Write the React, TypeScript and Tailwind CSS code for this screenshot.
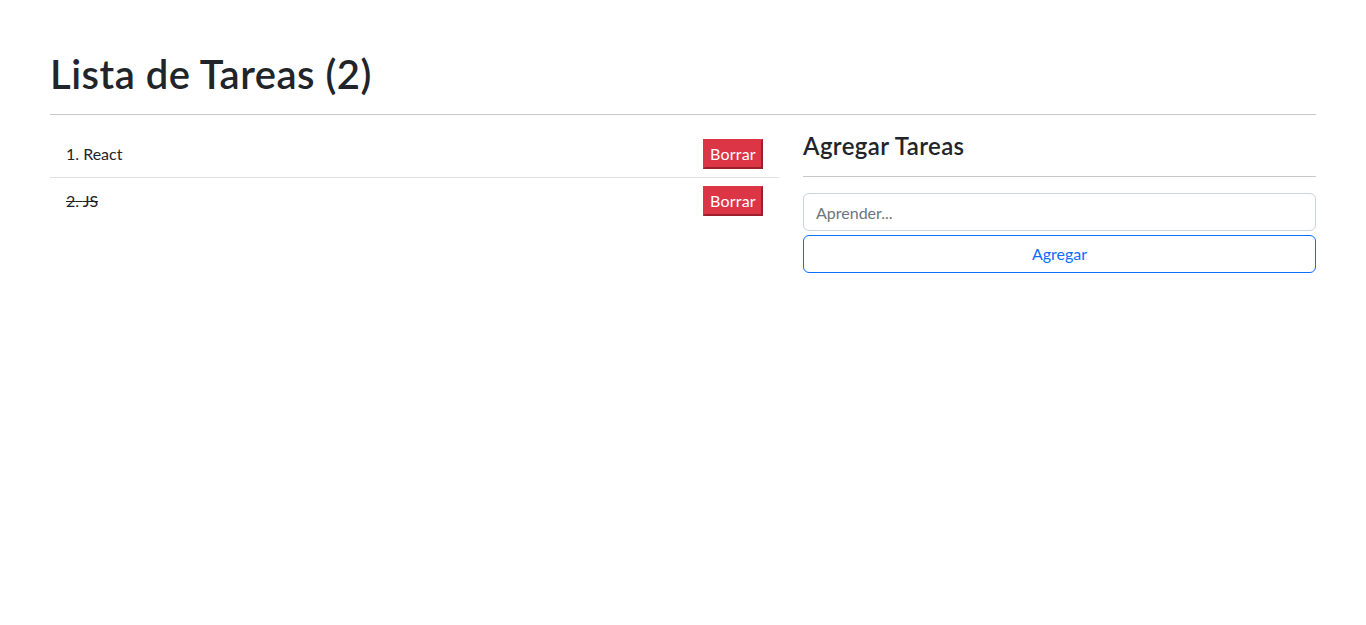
export default function App() {
  const tasks = [
    { id: 1, text: "React", done: false },
    { id: 2, text: "JS", done: true },
  ];
  return (
    <div className="min-h-screen bg-white text-[#212529] px-[50px] pt-[50px]" style={{ fontFamily: 'Lato, "Open Sans", sans-serif' }}>
      <h1 className="text-[40px] leading-[48px] font-semibold tracking-[0.5px] m-0">Lista de Tareas (2)</h1>
      <div className="h-px bg-[#c8c9ca] mt-[16px] mb-[16px]" />
      <div className="flex gap-[24px]">
        <div className="w-[729px] shrink-0">
          {tasks.map((t, i) => (
            <div
              key={t.id}
              className={`flex items-center justify-between px-[16px] py-[8px] ${i < tasks.length - 1 ? "border-b border-[#dee2e6]" : ""}`}
            >
              <span className={`text-[16px] ${t.done ? "line-through" : ""}`}>
                {i + 1}. {t.text}
              </span>
              <button className="w-[60px] h-[30px] bg-[#dc3545] text-white text-[16px] tracking-[0.2px] border-2 border-solid border-t-[#dc3545] border-l-[#dc3545] border-r-[#9c1f2b] border-b-[#9c1f2b] flex items-center justify-center">
                Borrar
              </button>
            </div>
          ))}
        </div>
        <div className="flex-1">
          <h4 className="text-[24px] leading-[29px] font-semibold tracking-[0.4px] m-0">Agregar Tareas</h4>
          <div className="h-px bg-[#c8c9ca] mt-[16px] mb-[16px]" />
          <input
            className="block w-full h-[38px] border border-[#ced4da] rounded-[6px] px-[12px] text-[16px] outline-none placeholder:text-[#6c757d]"
            placeholder="Aprender..."
          />
          <button className="block w-full h-[38px] mt-[4px] border border-[#0d6efd] rounded-[6px] text-[#0d6efd] text-[16px] bg-white">
            Agregar
          </button>
        </div>
      </div>
    </div>
  );
}
